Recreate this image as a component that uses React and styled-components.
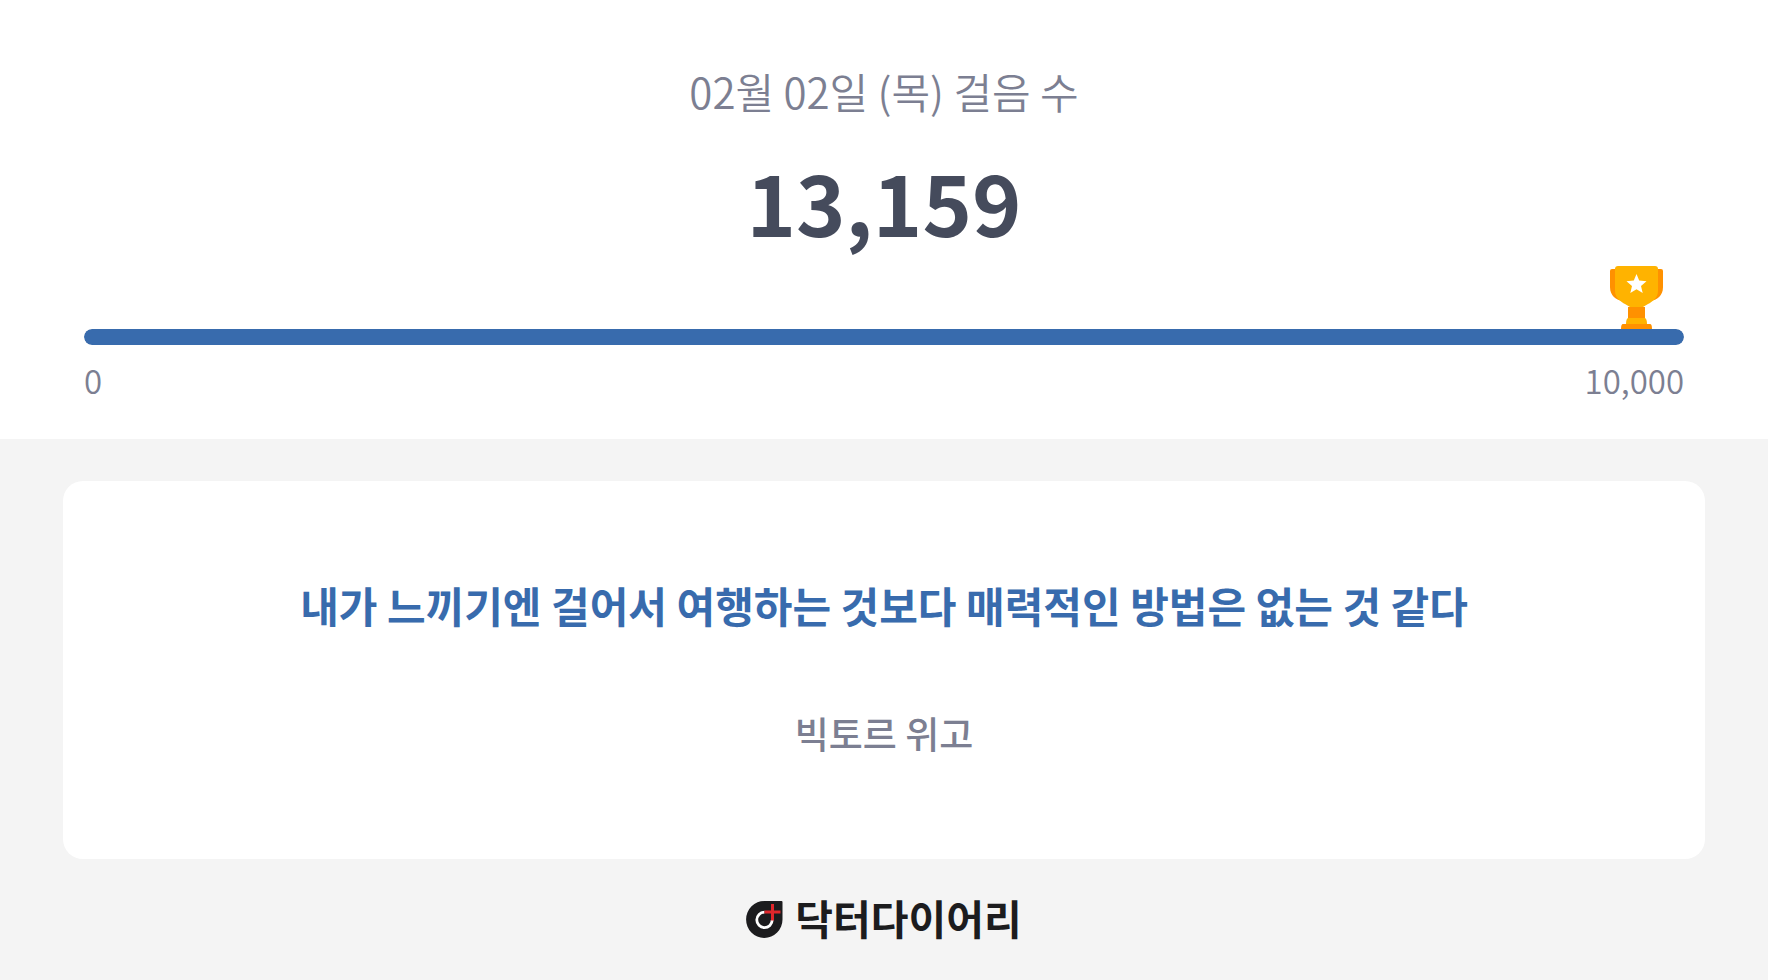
import React from "react";
import styled, { createGlobalStyle } from "styled-components";

const steps = 13159;
const goal = 10000;

const App = () => {
  const percent = Math.min(100, (steps / goal) * 100);

  return (
    <Page>
      <GlobalStyle />
      <Summary>
        <DateTitle>02월 02일 (목) 걸음 수</DateTitle>
        <StepCount>{steps.toLocaleString("en-US")}</StepCount>
        <TrophyRow>
          <Trophy />
        </TrophyRow>
        <Track
          role="progressbar"
          aria-label="걸음 수"
          aria-valuemin={0}
          aria-valuemax={goal}
          aria-valuenow={Math.min(steps, goal)}
        >
          <Fill style={{ width: `${percent}%` }} />
        </Track>
        <Scale>
          <span>0</span>
          <span>{goal.toLocaleString("en-US")}</span>
        </Scale>
      </Summary>
      <Content>
        <QuoteCard>
          <Quote>
            내가 느끼기엔 걸어서 여행하는 것보다 매력적인 방법은 없는 것 같다
          </Quote>
          <Author>빅토르 위고</Author>
        </QuoteCard>
        <Brand>
          <BrandMark />
          <BrandName>닥터다이어리</BrandName>
        </Brand>
      </Content>
    </Page>
  );
};

const Trophy = () => (
  <svg width="53" height="63" viewBox="0 0 53 63" aria-hidden="true">
    <path
      d="M2 3H51Q53 3 53 5V21C53 30 47 34 40 35H13C6 34 0 30 0 21V5Q0 3 2 3Z"
      fill="#ff9100"
    />
    <path
      d="M8 0H45Q48 0 48 3V25C48 32 42 36 38 38L33 41H20L15 38C11 36 5 32 5 25V3Q5 0 8 0Z"
      fill="#ffb300"
    />
    <path d="M18 41H35V53H18Z" fill="#ff9100" />
    <path d="M18 52H35Q37 53 37 58H16Q16 53 18 52Z" fill="#ffb300" />
    <path d="M13 58H40Q42 58 42 63H11Q11 58 13 58Z" fill="#ff9100" />
    <path
      d="M26.5 8L29.2 14.6L36.5 15.2L31 19.9L32.7 27L26.5 23.2L20.3 27L22 19.9L16.5 15.2L23.8 14.6Z"
      fill="#fff"
    />
  </svg>
);

const BrandMark = () => (
  <svg width="37" height="37" viewBox="0 0 37 37" aria-hidden="true">
    <path
      d="M18.5 0H35.5Q36.5 0 36.5 1V18.5A18.2 18.5 0 1 1 18.5 0Z"
      fill="#1c1c1e"
    />
    <path
      d="M18.5 11.2A7.7 7.7 0 1 0 26.2 19"
      fill="none"
      stroke="#fff"
      strokeWidth="2.8"
    />
    <path
      d="M26.5 3V19.5M18.5 11H34.5"
      fill="none"
      stroke="#e0262b"
      strokeWidth="3"
    />
  </svg>
);

const GlobalStyle = createGlobalStyle`
  * {
    box-sizing: border-box;
  }

  body {
    margin: 0;
    font-family: "Noto Sans CJK KR", "Noto Sans", sans-serif;
    background-color: #f4f4f4;
  }
`;

const Page = styled.main`
  display: flex;
  flex-direction: column;
  min-height: 100vh;
`;

const Summary = styled.section`
  display: flex;
  flex-direction: column;
  padding: 60px 84px 35px;
  background-color: #fff;
`;

const DateTitle = styled.h1`
  margin: 0;
  font-size: 42px;
  font-weight: 350;
  line-height: 62px;
  text-align: center;
  color: #7c7f92;
`;

const StepCount = styled.strong`
  margin-top: 17px;
  font-size: 84px;
  font-weight: 700;
  line-height: 124px;
  text-align: center;
  color: #454b5c;
`;

const TrophyRow = styled.div`
  display: flex;
  justify-content: flex-end;
  margin-top: 3px;
  padding-right: 21px;

  svg {
    display: block;
  }
`;

const Track = styled.div`
  height: 16px;
  border-radius: 8px;
  background-color: #eaeaea;
  overflow: hidden;
`;

const Fill = styled.div`
  height: 100%;
  border-radius: 8px;
  background-color: #386bad;
`;

const Scale = styled.div`
  display: flex;
  justify-content: space-between;
  margin-top: 11px;
  font-size: 33px;
  font-weight: 350;
  line-height: 48px;
  color: #7c7f92;
`;

const Content = styled.section`
  padding: 42px 63px;
  background-color: #f4f4f4;
`;

const QuoteCard = styled.figure`
  display: flex;
  flex-direction: column;
  align-items: center;
  gap: 64px;
  margin: 0;
  padding: 92px 40px 94px;
  border-radius: 20px;
  background-color: #fff;
  text-align: center;
`;

const Quote = styled.blockquote`
  margin: 0;
  font-size: 42px;
  font-weight: 700;
  line-height: 64px;
  color: #386bad;
`;

const Author = styled.figcaption`
  font-size: 37px;
  font-weight: 500;
  line-height: 64px;
  color: #7c7f92;
`;

const Brand = styled.div`
  display: flex;
  align-items: flex-end;
  justify-content: center;
  gap: 12px;
  margin-top: 37px;
`;

const BrandName = styled.span`
  font-size: 41px;
  font-weight: 700;
  line-height: 42px;
  color: #1c1c1e;
`;

export default App;
